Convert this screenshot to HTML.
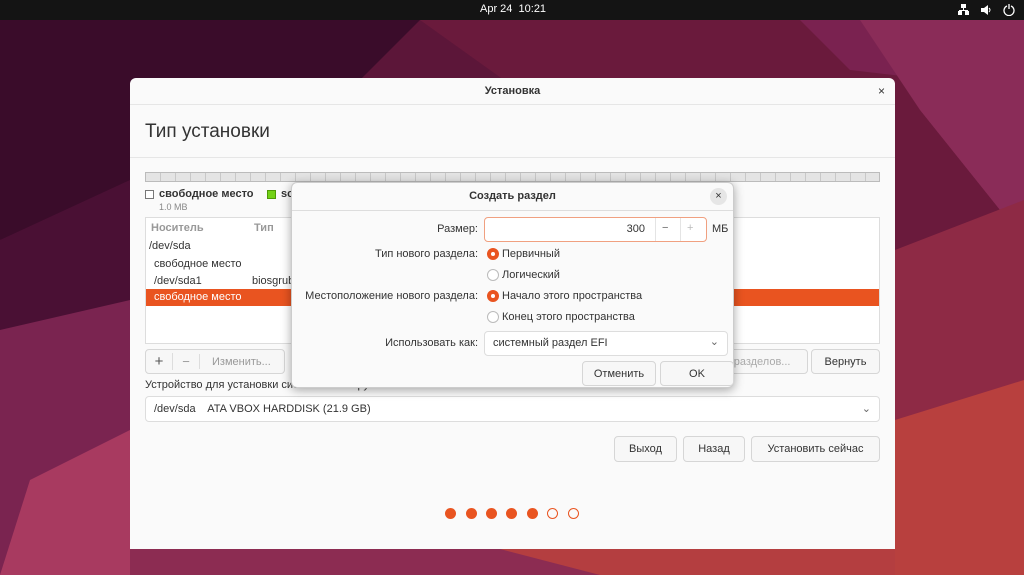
<!DOCTYPE html>
<html><head><meta charset="utf-8"><style>
*{box-sizing:border-box;margin:0;padding:0}
body{width:1024px;height:575px;overflow:hidden;position:relative;font-family:"Liberation Sans",sans-serif;font-size:11px;color:#333;background:#5a1438}
.abs{position:absolute}
.btn{position:absolute;border:1px solid #d6d6d6;border-radius:4px;background:#f7f7f7;display:flex;align-items:center;justify-content:center;font-size:11px;color:#333}
.radio{position:absolute;width:12px;height:12px;border-radius:50%;border:1px solid #bbb;background:#fff}
.radio.on{background:#e95420;border-color:#e95420}
.radio.on::after{content:"";position:absolute;left:3px;top:3px;width:4px;height:4px;border-radius:50%;background:#fff}
.lbl{position:absolute;font-size:11px;white-space:nowrap}
.dot{position:absolute;width:11px;height:11px;border-radius:50%;background:#e95420;top:508px}
.dot.o{background:none;border:1px solid #e95420}
</style></head><body>
<svg class="abs" style="left:0;top:0" width="1024" height="575">
<rect width="1024" height="575" fill="#5c1639"/>
<polygon points="0,20 420,20 300,140 0,240" fill="#3a0c2a"/>
<polygon points="420,20 820,20 1024,120 1024,300 700,220" fill="#6a1a3c"/>
<polygon points="800,20 1024,20 1024,90 850,70" fill="#7a2250"/>
<polygon points="860,20 1024,20 1024,240 920,110" fill="#8a2c58"/>
<polygon points="0,240 130,180 130,575 0,575" fill="#4a1034"/>
<polygon points="0,330 130,300 130,575 0,575" fill="#7a2450"/>
<polygon points="30,480 130,430 130,575 0,575" fill="#a83a60"/>
<polygon points="895,250 1024,200 1024,575 895,575" fill="#8e2a45"/>
<polygon points="895,420 1024,380 1024,575 895,575" fill="#b8403e"/>
<polygon points="130,549 895,549 895,575 130,575" fill="#8c2c52"/>
<polygon points="500,549 895,549 895,575 600,575" fill="#b43e40"/>
</svg>
<div class="abs" style="left:0;top:0;width:1024px;height:20px;background:#141414;color:#fff;font-size:11px">
<div class="abs" style="left:480px;top:3px">Apr 24&nbsp; 10:21</div>
<svg class="abs" style="left:958px;top:4px" width="60" height="12"><g fill="#fff"><rect x="3" y="0" width="5" height="4"/><rect x="5" y="4" width="1" height="3"/><rect x="1" y="6" width="9" height="1"/><rect x="0" y="7" width="4" height="4"/><rect x="7" y="7" width="4" height="4"/>
<path d="M23 4h3l4-3v10l-4-3h-3z"/><path d="M31 4q2 2 0 4" stroke="#fff" fill="none"/></g>
<path d="M49 2a5 5 0 1 0 4 0M51 0v5" stroke="#fff" stroke-width="1.3" fill="none"/></svg>
</div>
<!-- main window -->
<div class="abs" style="left:130px;top:78px;width:765px;height:471px;background:#fafafa;border-radius:6px 6px 0 0">
<div class="abs" style="left:0;top:0;width:765px;height:27px;border-bottom:1px solid #e6e6e6;text-align:center;line-height:27px;font-weight:bold;font-size:11px">Установка</div>
<div class="abs" style="right:10px;top:6px;font-size:12px">×</div>
<div class="abs" style="left:15px;top:43px;font-size:19px;color:#333">Тип установки</div>
<div class="abs" style="left:0;top:79px;width:765px;height:1px;background:#e6e6e6"></div>
<div class="abs" style="left:15px;top:94px;width:735px;height:10px;border:1px solid #bbb;background:repeating-linear-gradient(90deg,#e4e4e4 0 14px,#c8c8c8 14px 15px)"></div>
<div class="abs" style="left:15px;top:112px;width:9px;height:9px;border:1px solid #777;background:#fff"></div>
<div class="lbl" style="left:29px;top:110px;font-weight:bold">свободное место</div>
<div class="lbl" style="left:29px;top:124px;font-size:9px;color:#888">1.0 MB</div>
<div class="abs" style="left:137px;top:112px;width:9px;height:9px;background:#73d216;border:1px solid #4e9a06"></div>
<div class="lbl" style="left:151px;top:110px;font-weight:bold">sc</div>
<div class="abs" style="left:15px;top:139px;width:735px;height:127px;border:1px solid #ddd;background:#fff">
<div class="lbl" style="left:5px;top:4px;color:#999;font-weight:bold">Носитель</div>
<div class="lbl" style="left:108px;top:4px;color:#999;font-weight:bold">Тип</div>
<div class="lbl" style="left:3px;top:22px">/dev/sda</div>
<div class="lbl" style="left:8px;top:40px">свободное место</div>
<div class="lbl" style="left:8px;top:57px">/dev/sda1</div>
<div class="lbl" style="left:106px;top:57px">biosgrub</div>
<div class="abs" style="left:0;top:71px;width:733px;height:17px;background:#e95420"></div>
<div class="lbl" style="left:8px;top:73px;color:#fff">свободное место</div>
</div>
<div class="btn" style="left:15px;top:271px;width:140px;height:25px;justify-content:flex-start;color:#999">
<span style="width:27px;text-align:center;font-size:15px;color:#555;border-right:1px solid #ddd">+</span><span style="width:27px;text-align:center;font-size:13px;border-right:1px solid #ddd">−</span><span style="padding-left:12px">Изменить...</span></div>
<div class="btn" style="left:540px;top:271px;width:138px;height:25px;color:#aaa">Таблица разделов...</div>
<div class="btn" style="left:681px;top:271px;width:69px;height:25px">Вернуть</div>
<div class="lbl" style="left:15px;top:301px">Устройство для установки системного загрузчика:</div>
<div class="abs" style="left:15px;top:318px;width:735px;height:26px;border:1px solid #ddd;border-radius:4px;background:#fff">
<div class="lbl" style="left:8px;top:6px">/dev/sda&nbsp;&nbsp;&nbsp; ATA VBOX HARDDISK (21.9 GB)</div>
<div class="lbl" style="right:8px;top:5px;color:#666">⌄</div></div>
<div class="btn" style="left:484px;top:358px;width:63px;height:26px">Выход</div>
<div class="btn" style="left:553px;top:358px;width:62px;height:26px">Назад</div>
<div class="btn" style="left:621px;top:358px;width:129px;height:26px">Установить сейчас</div>
</div>
<div class="dot" style="left:445px"></div><div class="dot" style="left:466px"></div><div class="dot" style="left:486px"></div><div class="dot" style="left:506px"></div><div class="dot" style="left:527px"></div><div class="dot o" style="left:547px"></div><div class="dot o" style="left:568px"></div>
<!-- dialog -->
<div class="abs" style="left:291px;top:182px;width:443px;height:206px;background:#fafafa;border:1px solid #ccc;border-radius:6px;box-shadow:0 2px 10px rgba(0,0,0,.35)">
<div class="abs" style="left:0;top:0;width:441px;height:28px;border-bottom:1px solid #ddd;text-align:center;line-height:27px;font-weight:bold">Создать раздел</div>
<div class="abs" style="left:418px;top:5px;width:17px;height:17px;border-radius:50%;background:#e6e6e6;text-align:center;line-height:16px;font-size:11px">×</div>
<div class="lbl" style="right:255px;top:40px">Размер:</div>
<div class="abs" style="left:192px;top:34px;width:223px;height:25px;border:1px solid #f0a080;border-radius:4px;background:#fff">
<div class="lbl" style="left:0;width:160px;text-align:right;top:5px">300</div>
<div class="abs" style="left:170px;top:0;width:1px;height:23px;background:#e4e4e4"></div>
<div class="lbl" style="left:177px;top:4px;color:#666">−</div>
<div class="abs" style="left:195px;top:0;width:1px;height:23px;background:#e4e4e4"></div>
<div class="lbl" style="left:202px;top:4px;color:#bbb">+</div></div>
<div class="lbl" style="left:420px;top:40px">МБ</div>
<div class="lbl" style="right:255px;top:65px">Тип нового раздела:</div>
<div class="radio on" style="left:195px;top:65px"></div><div class="lbl" style="left:210px;top:65px">Первичный</div>
<div class="radio" style="left:195px;top:86px"></div><div class="lbl" style="left:210px;top:86px">Логический</div>
<div class="lbl" style="right:255px;top:107px">Местоположение нового раздела:</div>
<div class="radio on" style="left:195px;top:107px"></div><div class="lbl" style="left:210px;top:107px">Начало этого пространства</div>
<div class="radio" style="left:195px;top:128px"></div><div class="lbl" style="left:210px;top:128px">Конец этого пространства</div>
<div class="lbl" style="right:255px;top:154px">Использовать как:</div>
<div class="abs" style="left:192px;top:148px;width:244px;height:25px;border:1px solid #ddd;border-radius:4px;background:#fff">
<div class="lbl" style="left:8px;top:5px">системный раздел EFI</div><div class="lbl" style="right:8px;top:3px;color:#666">⌄</div></div>
<div class="btn" style="left:290px;top:178px;width:74px;height:25px">Отменить</div>
<div class="btn" style="left:368px;top:178px;width:74px;height:25px">OK</div>
</div>
</body></html>
